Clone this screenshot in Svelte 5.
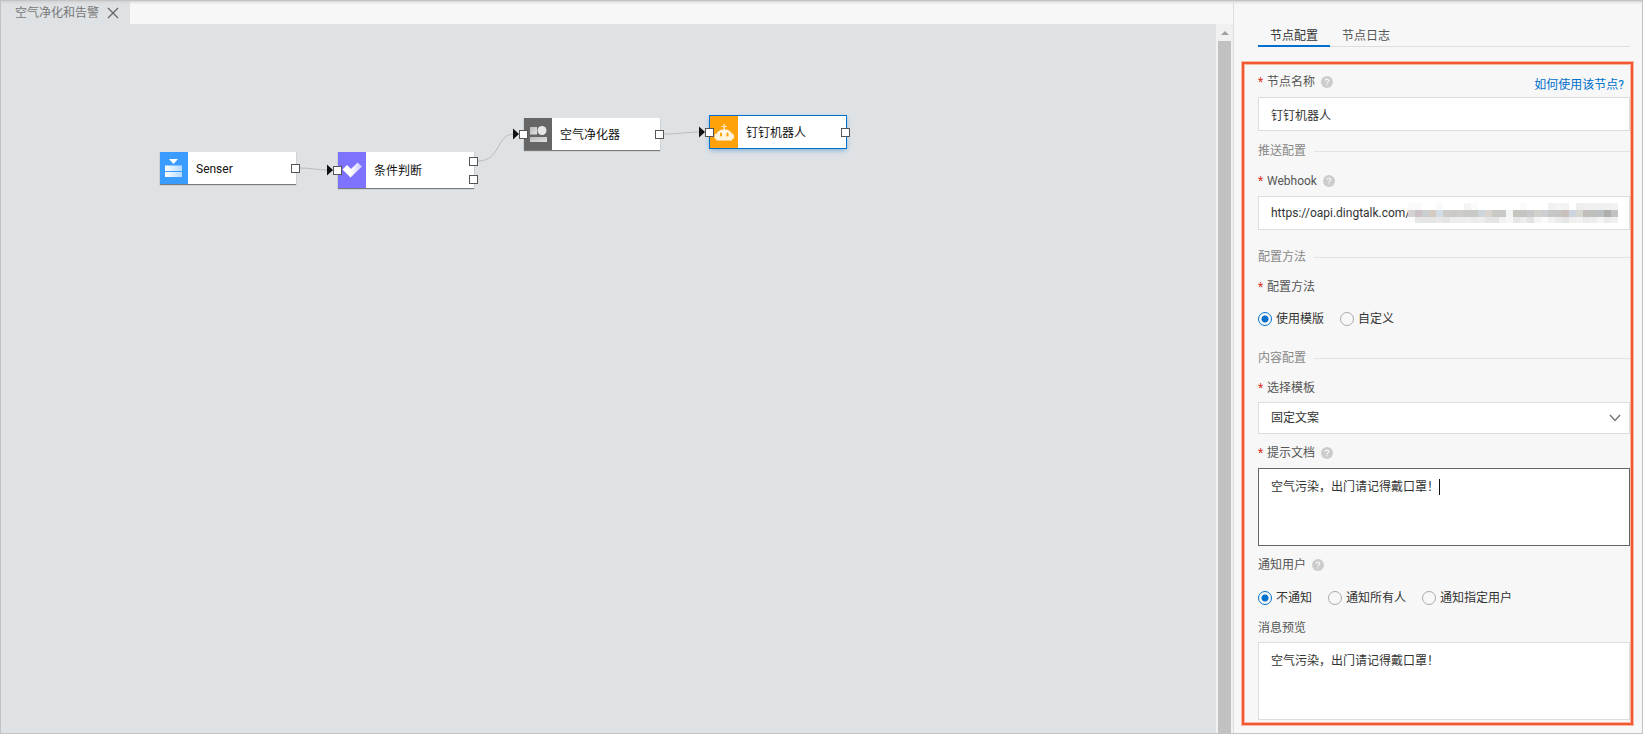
<script lang="ts">
    type Port = { x: number; y: number };

    type FlowNode = {
        id: string;
        label: string;
        kind: "device" | "condition" | "purifier" | "robot";
        x: number;
        y: number;
        height: number;
        ports: Port[];
        selected?: boolean;
    };

    const nodes: FlowNode[] = [
        { id: "sensor", label: "Senser", kind: "device", x: 159, y: 128, height: 32, ports: [{ x: 131, y: 12 }] },
        {
            id: "condition",
            label: "条件判断",
            kind: "condition",
            x: 337,
            y: 128,
            height: 36,
            ports: [{ x: -5, y: 14 }, { x: 131, y: 5 }, { x: 131, y: 23 }],
        },
        {
            id: "purifier",
            label: "空气净化器",
            kind: "purifier",
            x: 523,
            y: 94,
            height: 32,
            ports: [{ x: -5, y: 12 }, { x: 131, y: 12 }],
        },
        {
            id: "robot",
            label: "钉钉机器人",
            kind: "robot",
            x: 709,
            y: 92,
            height: 32,
            ports: [{ x: -5, y: 12 }, { x: 131, y: 12 }],
            selected: true,
        },
    ];

    const links = [
        { path: "M299 144C310 144 316 146 327 146", tip: { x: 326, y: 146 } },
        { path: "M477 137C500 137 495 110 513 110", tip: { x: 512, y: 110 } },
        { path: "M663 110C680 110 684 108 700 108", tip: { x: 698, y: 108 } },
    ];

    const maskRows = [
        ["#fafafa", "#fafafa", "#fff", "#fff", "#fbf9f9", "#fff", "#fff", "#fff", "#f5f4f3", "#fafbfd", "#fff", "#fff", "#fff", "#fff", "#fff", "#fff", "#fbfaf8", "#fff", "#fff", "#fff", "#f1f1f1", "#f4f4f4", "#f1f3f4", "#fff", "#edefed", "#f0f0f0", "#efefef", "#f0f0ef", "#f0f0f0", "#f2f2f2"],
        ["#d5d3d2", "#cdbfc8", "#cacecf", "#d4ccc0", "#d3dde5", "#cccbc8", "#cac9c8", "#cecbc8", "#c9c9c8", "#c9c9c7", "#cdd5dd", "#dbd5d0", "#c8c8c5", "#c8c9c6", "#f2f6f7", "#c4c6be", "#c4c5c0", "#c6c9c7", "#d2d2cd", "#cbcfd1", "#c7c7c8", "#c7c4c4", "#c9c0bb", "#cdd4dd", "#d5d9d2", "#c3bdba", "#bec0be", "#bbc0c3", "#b0afac", "#c0c3c2"],
        ["#fafafa", "#e6e6e6", "#e4e4e4", "#e5e5e5", "#e8e8e8", "#e4e4e4", "#ededed", "#ededed", "#eee", "#ebebeb", "#ededed", "#e5e5e5", "#e4e4e4", "#f2f2f2", "#f7f7f7", "#e6e6e6", "#ececec", "#e2e2e2", "#f4f4f4", "#fafafa", "#f2f2f2", "#ebebeb", "#e6e6e6", "#efefef", "#f2f2f2", "#ebebeb", "#ededed", "#f5f5f5", "#ebebeb", "#f0f0f0"],
    ];

    let nodeName = $state("钉钉机器人");
    let webhook = $state("https://oapi.dingtalk.com/");
    let method = $state("template");
    let template = $state("fixed");
    let content = $state("空气污染，出门请记得戴口罩！");
    let notify = $state("none");
</script>

{#snippet help()}
    <svg class="help" viewBox="0 0 12 12" aria-hidden="true">
        <circle cx="6" cy="6" r="6" fill="#ccc" />
        <path d="M4.2 4.7C4.2 2.5 7.8 2.5 7.8 4.6C7.8 5.8 6 5.8 6 7.2" fill="none" stroke="#f7f7f7" stroke-width="1.2" />
        <rect x="5.4" y="8.2" width="1.2" height="1.2" fill="#f7f7f7" />
    </svg>
{/snippet}

{#snippet radio(name: string, value: string, text: string, current: string, pick: (v: string) => void)}
    <label class="radio">
        <input type="radio" {name} {value} checked={current === value} onchange={() => pick(value)} />
        {text}
    </label>
{/snippet}

<div class="app">
    <main class="editor">
        <div class="file-tabs">
            <div class="file-tab">
                <span>空气净化和告警</span>
                <button class="close" aria-label="关闭">
                    <svg viewBox="0 0 12 12"><path d="M1 1L11 11M11 1L1 11" fill="none" stroke="#666" stroke-width="1.3" /></svg>
                </button>
            </div>
        </div>
        <div class="workspace">
            <div class="canvas">
                <svg class="links">
                    {#each links as link}
                        <path d={link.path} fill="none" stroke="#bbb" />
                        <path d="M{link.tip.x} {link.tip.y - 5.5}l6 5.5l-6 5.5z" fill="#111" />
                    {/each}
                </svg>
                {#each nodes as node (node.id)}
                    <div
                        class="node"
                        class:selected={node.selected}
                        style="left: {node.x}px; top: {node.y}px; height: {node.height}px"
                    >
                        <div class="node-icon {node.kind}">
                            <svg viewBox="0 0 28 32">
                                {#if node.kind === "device"}
                                    <defs>
                                        <linearGradient id="bar">
                                            <stop offset="0" stop-color="#fff" />
                                            <stop offset="1" stop-color="#b5d9ff" />
                                        </linearGradient>
                                    </defs>
                                    <path d="M9 7H18L13.5 12Z" fill="#fff" />
                                    <rect x="5" y="13.5" width="17" height="5.5" fill="url(#bar)" />
                                    <rect x="5" y="20" width="17" height="5" fill="url(#bar)" />
                                {:else if node.kind === "condition"}
                                    <defs>
                                        <linearGradient id="tick">
                                            <stop offset="0.45" stop-color="#fff" />
                                            <stop offset="1" stop-color="#c9c5ff" />
                                        </linearGradient>
                                    </defs>
                                    <path d="M4.5 15.5L9 11L13 15L19.5 8.5L24 12.5L12.5 23.5Z" fill="url(#tick)" />
                                {:else if node.kind === "purifier"}
                                    <defs>
                                        <linearGradient id="metal" x2="1" y2="1">
                                            <stop offset="0" stop-color="#bbb" />
                                            <stop offset="1" stop-color="#e2e2e2" />
                                        </linearGradient>
                                    </defs>
                                    <rect x="6" y="9" width="7" height="7.5" fill="url(#metal)" />
                                    <circle cx="18" cy="12.5" r="4.5" fill="#e6e6e6" />
                                    <rect x="6" y="19" width="17" height="5" fill="url(#metal)" />
                                {:else}
                                    <path d="M13.5 8h1.5v2h2v1h-2v3h-1.5v-3h-2v-1h2z" fill="#ffe3b3" />
                                    <path d="M6.5 24.5V19C6.5 11.5 22 11.5 22 19V24.5Z" fill="#fff8ea" />
                                    <rect x="4.5" y="17.5" width="19.5" height="6" rx="2.5" fill="#fff3dc" />
                                    <rect x="10" y="16.5" width="2" height="4" rx="1" fill="#ffa20a" />
                                    <rect x="16.5" y="16.5" width="2" height="4" rx="1" fill="#ffa20a" />
                                {/if}
                            </svg>
                        </div>
                        <span class="node-label">{node.label}</span>
                        {#each node.ports as port}
                            <i class="port" style="left: {port.x}px; top: {port.y}px"></i>
                        {/each}
                    </div>
                {/each}
            </div>
            <div class="scrollbar">
                <svg class="scroll-arrow" viewBox="0 0 8 4"><path d="M0 4L4 0L8 4Z" fill="#a0a0a0" /></svg>
                <div class="thumb"></div>
            </div>
        </div>
    </main>

    <aside class="panel">
        <div class="tabs" role="tablist">
            <button class="tab active" role="tab" aria-selected="true">节点配置</button>
            <button class="tab" role="tab" aria-selected="false">节点日志</button>
        </div>

        <form class="config">
            <div class="field">
                <div class="heading">
                    <label for="node-name"><b>*</b>节点名称</label>
                    {@render help()}
                    <a href="#help">如何使用该节点?</a>
                </div>
                <input id="node-name" class="control" type="text" bind:value={nodeName} />
            </div>

            <h3 class="section">推送配置</h3>
            <div class="field">
                <div class="heading">
                    <label for="webhook"><b>*</b>Webhook</label>
                    {@render help()}
                </div>
                <div class="masked">
                    <input id="webhook" class="control" type="text" bind:value={webhook} />
                    <div class="mask">
                        {#each maskRows as row}
                            {#each row as shade}
                                <i style="background: {shade}"></i>
                            {/each}
                        {/each}
                    </div>
                </div>
            </div>

            <h3 class="section spaced">配置方法</h3>
            <div class="field">
                <div class="heading" id="method-label"><span><b>*</b>配置方法</span></div>
                <div class="radios method" role="radiogroup" aria-labelledby="method-label">
                    {@render radio("method", "template", "使用模版", method, (v) => (method = v))}
                    {@render radio("method", "custom", "自定义", method, (v) => (method = v))}
                </div>
            </div>

            <h3 class="section spaced">内容配置</h3>
            <div class="field">
                <div class="heading tight"><label for="template"><b>*</b>选择模板</label></div>
                <div class="select">
                    <select id="template" class="control" bind:value={template}>
                        <option value="fixed">固定文案</option>
                    </select>
                    <svg class="chevron" viewBox="0 0 12 8"><path d="M1 1L6 6.5L11 1" fill="none" stroke="#777" stroke-width="1.5" /></svg>
                </div>
            </div>
            <div class="field next">
                <div class="heading">
                    <label for="content"><b>*</b>提示文档</label>
                    {@render help()}
                </div>
                <div class="editing">
                    <textarea id="content" class="control" bind:value={content}></textarea>
                    <i class="caret"></i>
                </div>
            </div>
            <div class="field next">
                <div class="heading" id="notify-label">
                    <span>通知用户</span>
                    {@render help()}
                </div>
                <div class="radios" role="radiogroup" aria-labelledby="notify-label">
                    {@render radio("notify", "none", "不通知", notify, (v) => (notify = v))}
                    {@render radio("notify", "all", "通知所有人", notify, (v) => (notify = v))}
                    {@render radio("notify", "some", "通知指定用户", notify, (v) => (notify = v))}
                </div>
            </div>
            <div class="field">
                <div class="heading tight"><label for="preview">消息预览</label></div>
                <textarea id="preview" class="control" readonly value={content}></textarea>
            </div>
        </form>
    </aside>
</div>

<style>
    :global(body) {
        margin: 0;
    }

    .app {
        box-sizing: border-box;
        display: flex;
        min-height: 100vh;
        border: 1px solid #c3c3c3;
        background: #f7f7f7;
        box-shadow: inset 0 3px 3px -2px #ccc;
        color: #333;
        font: 12px/18px Roboto, "Noto Sans CJK SC", sans-serif;
    }

    .app * {
        box-sizing: border-box;
    }

    button,
    input,
    select,
    textarea {
        margin: 0;
        font: inherit;
        color: inherit;
    }

    .editor {
        flex: 1;
        display: flex;
        flex-direction: column;
        min-width: 0;
    }

    .file-tabs {
        display: flex;
        height: 23px;
    }

    .file-tab {
        display: flex;
        align-items: center;
        gap: 8px;
        padding: 0 11px 0 14px;
        background: #dee2e5;
        box-shadow: inset 0 3px 3px -2px #ccc;
        color: #777;
    }

    .close {
        display: flex;
        padding: 0;
        border: 0;
        background: none;

        & svg {
            width: 12px;
            height: 12px;
        }
    }

    .workspace {
        flex: 1;
        display: flex;
    }

    .canvas {
        position: relative;
        flex: 1;
        overflow: hidden;
        background: #dee2e5;
    }

    .links {
        position: absolute;
        inset: 0;
        width: 100%;
        height: 100%;
    }

    .node {
        position: absolute;
        display: flex;
        align-items: center;
        width: 136px;
        background: #fff;
        box-shadow: 0 1px 1px rgba(0, 0, 0, 0.45);

        &.selected {
            box-shadow: 0 0 0 1px #0070cc, 0 2px 5px rgba(0, 112, 204, 0.5);
        }
    }

    .node-icon {
        display: flex;
        align-items: center;
        width: 28px;
        height: 100%;

        & svg {
            width: 28px;
            height: 32px;
        }
    }

    .device {
        background: #3b9cff;
    }

    .condition {
        background: #7d73ff;
    }

    .purifier {
        background: #666;
    }

    .robot {
        background: #ffa20a;
    }

    .node-label {
        padding: 2px 0 0 8px;
        color: #111;
    }

    .port {
        position: absolute;
        width: 9px;
        height: 9px;
        border: 1px solid #555;
        background: #fff;
    }

    .scrollbar {
        display: flex;
        flex-direction: column;
        align-items: center;
        gap: 6px;
        width: 17px;
        padding-top: 7px;
        background: #f1f1f1;
    }

    .scroll-arrow {
        width: 8px;
        height: 4px;
    }

    .thumb {
        flex: 1;
        width: 13px;
        background: #c1c1c1;
    }

    .panel {
        width: 409px;
        border-left: 1px solid #ddd;
    }

    .tabs {
        display: flex;
        margin: 0 12px 0 24px;
        padding-top: 22px;
        box-shadow: inset 0 -1px #ddd;
    }

    .tab {
        height: 24px;
        padding: 4px 12px 0;
        border: 0;
        border-bottom: 2px solid transparent;
        background: none;
        color: #555;

        &.active {
            border-bottom-color: #0070cc;
            color: #333;
        }
    }

    .config {
        margin: 15px 9px 7px 8px;
        padding: 9px 1px 3px 14px;
        border: 2px solid #f1582f;
        box-shadow: 0 0 0 1px #f9b5a3, inset 0 0 0 1px #f9b5a3;
    }

    .heading {
        display: flex;
        align-items: center;
        height: 18px;
        margin-bottom: 6px;
        color: #555;

        &.tight {
            margin-bottom: 5px;
        }

        & b {
            display: inline-block;
            width: 9px;
            color: #d93026;
            font-weight: normal;
        }

        & a {
            margin: 6px 6px 0 auto;
            color: #0070cc;
            text-decoration: none;
        }
    }

    .help {
        width: 12px;
        height: 12px;
        margin-left: 6px;
    }

    .control {
        display: block;
        width: 100%;
        height: 34px;
        padding: 0 12px;
        border: 1px solid #ddd;
        border-radius: 0;
        outline: 0;
        background: #fff;
        appearance: none;
    }

    textarea.control {
        height: 78px;
        padding: 9px 12px;
        resize: none;
    }

    select.control {
        height: 32px;
    }

    .section {
        display: flex;
        align-items: center;
        gap: 8px;
        margin: 11px 0 12px;
        color: #888;
        font-size: 12px;
        font-weight: normal;

        &::after {
            content: "";
            flex: 1;
            height: 1px;
            background: #e2e2e2;
        }

        &.spaced {
            margin-top: 18px;
        }
    }

    .masked,
    .select,
    .editing {
        position: relative;
    }

    .mask {
        position: absolute;
        top: 7px;
        right: 12px;
        display: grid;
        grid-template-columns: repeat(30, 7px);
        grid-template-rows: 7px 7px 6px;
    }

    .chevron {
        position: absolute;
        top: 12px;
        right: 9px;
        width: 12px;
        height: 8px;
        pointer-events: none;
    }

    .editing .control {
        border-color: #666;
    }

    .caret {
        position: absolute;
        top: 11px;
        left: 181px;
        width: 1px;
        height: 16px;
        background: #111;
    }

    .radios {
        display: flex;
        gap: 16px;
        padding: 9px 0 12px;
    }

    .radios.method {
        padding: 8px 0 3px;
    }

    .radio {
        display: flex;
        align-items: center;
        gap: 4px;

        & input {
            appearance: none;
            width: 14px;
            height: 14px;
            border: 1px solid #aaa;
            border-radius: 50%;

            &:checked {
                border-color: #0070cc;
                background: radial-gradient(circle, #0070cc 3px, transparent 4px);
            }
        }
    }

    .next {
        margin-top: 10px;
    }
</style>
